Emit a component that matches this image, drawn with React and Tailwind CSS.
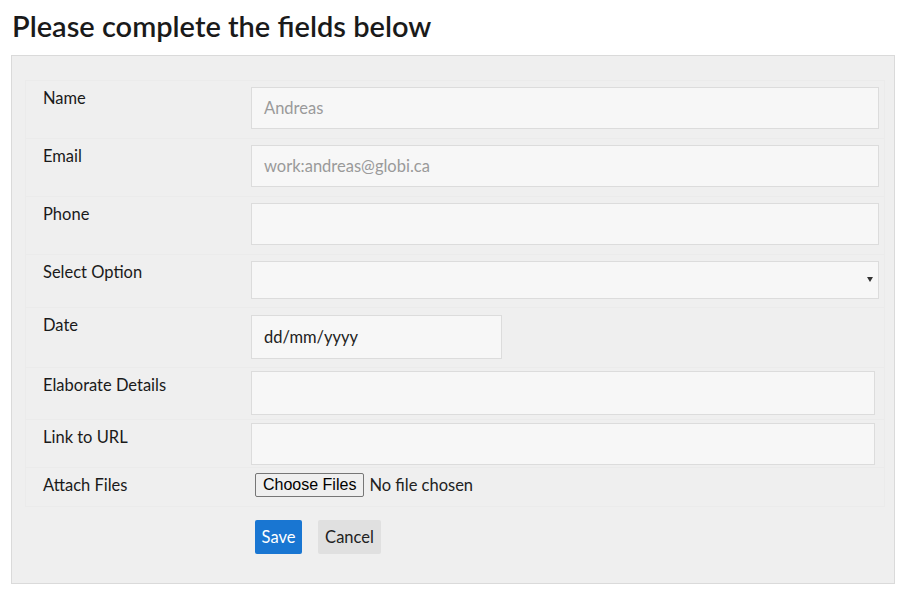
const Row = ({ label, h, top, children, last }) => (
  <div
    className={`flex border-x border-t border-[#ebebeb] ${last ? "border-b" : ""}`}
    style={{ height: h }}
  >
    <div className="w-[225px] shrink-0 pl-[17px] pt-[5px] text-[16.5px] leading-[24px] text-[#1a1a1a]">
      {label}
    </div>
    <div style={{ paddingTop: top - 1 }}>{children}</div>
  </div>
);

const Field = ({ value, w = "w-[628px]", h = "h-[42px]", dark }) => (
  <div
    className={`${w} ${h} flex items-center border border-[#dcdcdc] bg-[#f7f7f7] pl-[12px] text-[16.5px] ${
      dark ? "text-[#222]" : "text-[#9a9a9a]"
    }`}
  >
    {value}
  </div>
);

export default function App() {
  return (
    <div className="min-h-screen bg-white font-['Lato',sans-serif]">
      <h1 className="ml-[12px] pt-[10px] mb-[13px] text-[29px] leading-[32px] font-semibold text-[#1a1a1a]">
        Please complete the fields below
      </h1>

      <div className="ml-[11px] w-[884px] h-[529px] border border-[#dadada] bg-[#efefef] pl-[13px] pr-[9px] pt-[24px]">
        <Row label="Name" h={58} top={7}>
          <Field value="Andreas" />
        </Row>
        <Row label="Email" h={58} top={7}>
          <Field value="work:andreas@globi.ca" />
        </Row>
        <Row label="Phone" h={58} top={7}>
          <Field value="" />
        </Row>
        <Row label="Select Option" h={53} top={7}>
          <div className="relative w-[628px] h-[38px] border border-[#dcdcdc] bg-[#f7f7f7]">
            <svg
              className="absolute right-[5px] top-[15px]"
              width="6"
              height="5"
              viewBox="0 0 6 5"
            >
              <path d="M0 0H6L3 5Z" fill="#333" />
            </svg>
          </div>
        </Row>
        <Row label="Date" h={60} top={8}>
          <Field value="dd/mm/yyyy" w="w-[251px]" h="h-[44px]" dark />
        </Row>
        <Row label="Elaborate Details" h={52} top={4}>
          <Field value="" w="w-[624px]" h="h-[44px]" />
        </Row>
        <Row label="Link to URL" h={48} top={4}>
          <Field value="" w="w-[624px]" h="h-[42px]" />
        </Row>
        <Row label="Attach Files" h={40} top={6} last>
          <div className="flex items-center pl-[4px]">
            <button className="h-[24px] px-[7px] rounded-[2px] border border-[#767676] bg-[#efefef] text-[16px] leading-[20px] text-black font-['Liberation_Sans',sans-serif]">
              Choose Files
            </button>
            <span className="ml-[5px] text-[16.5px] text-[#222]">No file chosen</span>
          </div>
        </Row>

        <div className="flex gap-[16px] pl-[230px] pt-[13px]">
          <button className="h-[34px] w-[47px] rounded-[2px] bg-[#1976d2] text-[16.5px] text-white">
            Save
          </button>
          <button className="h-[34px] w-[63px] rounded-[2px] bg-[#e0e0e0] text-[16.5px] text-[#222]">
            Cancel
          </button>
        </div>
      </div>
    </div>
  );
}
